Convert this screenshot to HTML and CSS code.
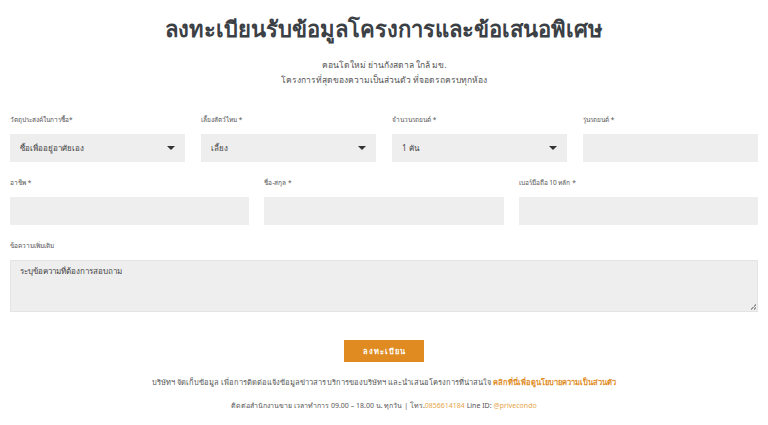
FILE: index.html
```html
<!DOCTYPE html>
<html lang="th">
<head>
    <meta charset="UTF-8">
    <title>ลงทะเบียน</title>
    <link rel="stylesheet" href="styles.css">
</head>
<body>
    <div class="page">
        <h1 class="title">ลงทะเบียนรับข้อมูลโครงการและข้อเสนอพิเศษ</h1>
        <p class="sub">คอนโดใหม่ ย่านกังสดาล ใกล้ มข.<br>โครงการที่สุดของความเป็นส่วนตัว ที่จอดรถครบทุกห้อง</p>

        <form class="form">
            <div class="row row4">
                <div class="field">
                    <label>วัตถุประสงค์ในการซื้อ*</label>
                    <div class="select">ซื้อเพื่ออยู่อาศัยเอง<span class="caret"></span></div>
                </div>
                <div class="field">
                    <label>เลี้ยงสัตว์ไหม *</label>
                    <div class="select">เลี้ยง<span class="caret"></span></div>
                </div>
                <div class="field">
                    <label>จำนวนรถยนต์ *</label>
                    <div class="select">1 คัน<span class="caret"></span></div>
                </div>
                <div class="field">
                    <label>รุ่นรถยนต์ *</label>
                    <div class="input"></div>
                </div>
            </div>
            <div class="row row3">
                <div class="field">
                    <label>อาชีพ *</label>
                    <div class="input"></div>
                </div>
                <div class="field">
                    <label>ชื่อ-สกุล *</label>
                    <div class="input"></div>
                </div>
                <div class="field">
                    <label>เบอร์มือถือ 10 หลัก *</label>
                    <div class="input"></div>
                </div>
            </div>
            <div class="field">
                <label>ข้อความเพิ่มเติม</label>
                <div class="textarea">ระบุข้อความที่ต้องการสอบถาม<span class="grip"></span></div>
            </div>
            <div class="actions">
                <span class="btn">ลงทะเบียน</span>
            </div>
        </form>

        <p class="note">บริษัทฯ จัดเก็บข้อมูล เพื่อการติดต่อแจ้งข้อมูลข่าวสาร บริการของบริษัทฯ และนำเสนอโครงการที่น่าสนใจ <a class="link">คลิกที่นี่เพื่อดูนโยบายความเป็นส่วนตัว</a></p>
        <p class="contact">ติดต่อสำนักงานขาย เวลาทำการ 09.00 – 18.00 น. ทุกวัน | โทร.<span class="hl">0856614184</span> Line ID: <span class="hl">@privecondo</span></p>
    </div>
</body>
</html>
```

FILE: styles.css
```css
*{
    margin: 0;
    padding: 0;
    box-sizing: border-box;
}
body{
    background: #fff;
    font-family: "Noto Sans", "Liberation Sans", sans-serif;
    color: #444;
}
.page{
    padding: 11px 10px 0;
}
.title{
    text-align: center;
    font-size: 22px;
    font-weight: 600;
    color: #3b4045;
    line-height: 34px;
}
.sub{
    text-align: center;
    font-size: 8.5px;
    line-height: 15px;
    color: #555;
    margin-top: 12px;
}
.form{
    margin-top: 28px;
}
.row{
    display: grid;
    column-gap: 15px;
    margin-bottom: 16px;
}
.row4{
    grid-template-columns: repeat(4, 1fr);
    column-gap: 16px;
}
.row3{
    grid-template-columns: repeat(3, 1fr);
}
.field label{
    display: block;
    font-size: 6.5px;
    line-height: 10px;
    color: #555;
    margin-bottom: 9px;
}
.select, .input{
    height: 28px;
    background: #eee;
    font-size: 8px;
    color: #444;
    display: flex;
    align-items: center;
    justify-content: space-between;
    padding: 0 10px;
}
.caret{
    width: 0;
    height: 0;
    border-left: 4px solid transparent;
    border-right: 4px solid transparent;
    border-top: 4px solid #333;
}
.textarea{
    position: relative;
    height: 52px;
    background: #eee;
    border: 1px solid #e4e4e4;
    font-size: 8px;
    color: #444;
    padding: 4px 9px;
}
.grip{
    position: absolute;
    right: 1px;
    bottom: 1px;
    width: 6px;
    height: 6px;
    background: linear-gradient(135deg, transparent 50%, #999 50%, #999 60%, transparent 60%, transparent 75%, #999 75%, #999 85%, transparent 85%);
}
.actions{
    text-align: center;
    margin-top: 25px;
}
.btn{
    display: inline-block;
    width: 80px;
    height: 22px;
    line-height: 22px;
    background: #e08b22;
    color: #fff;
    font-size: 7.5px;
    font-weight: 700;
    letter-spacing: 1px;
}
.note{
    text-align: center;
    font-size: 7.5px;
    color: #555;
    margin-top: 14px;
    line-height: 12px;
}
.link{
    color: #e08b22;
    font-weight: 700;
}
.contact{
    text-align: center;
    font-size: 7px;
    color: #555;
    margin-top: 12px;
    line-height: 12px;
}
.hl{
    color: #e6a54a;
}
```
